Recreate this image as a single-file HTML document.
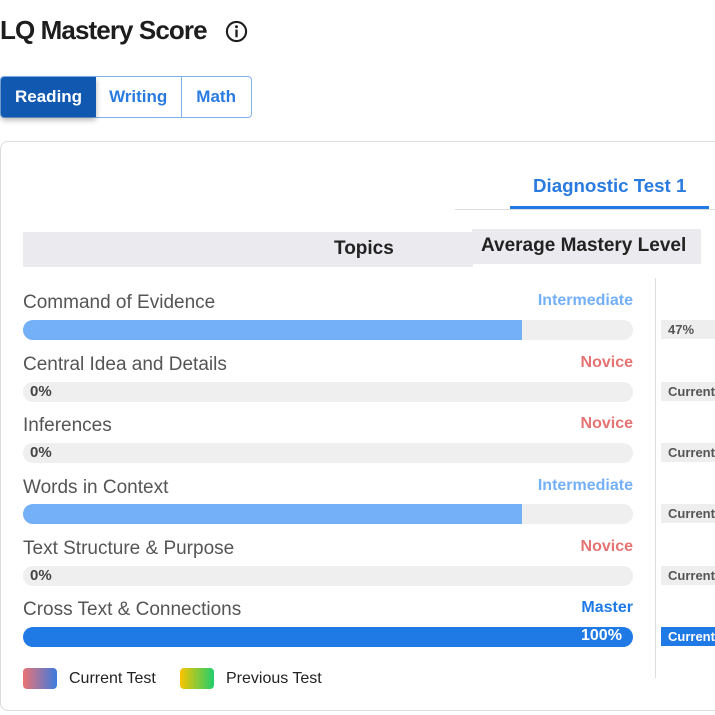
<!DOCTYPE html>
<html><head><style>
body{margin:0;width:715px;height:715px;overflow:hidden;background:#fff;font-family:"Liberation Sans",sans-serif;position:relative}
.a{position:absolute}
h1{position:absolute;left:0;top:15px;margin:0;font-size:26px;font-weight:bold;color:#1d1d1d;letter-spacing:-0.9px}
.tabs{left:0;top:76px;height:40px;display:flex;border:1px solid #7fb0ec;border-radius:4px}
.tabs div{padding:0 13px;line-height:40px;font-size:17px;font-weight:bold;color:#2a7be0}
.card{left:0;top:141px;width:730px;height:568px;border:1px solid #dcdcdc;border-radius:8px}
.lbl{left:23px;font-size:19px;color:#555}
.lv{right:82px;font-size:16px;font-weight:bold}
.bar{left:23px;width:610px;height:20px;border-radius:10px;background:#efefef;overflow:hidden}
.bar i{display:block;height:100%;background:#74b0f7}
.pct{left:30px;font-size:15px;font-weight:bold;color:#444}
.cur{left:661px;width:60px;height:19px;background:#eee;font-size:13px;font-weight:bold;color:#555;line-height:19px;padding-left:7px}
</style></head><body>
<h1>LQ Mastery Score</h1>
<svg class="a" style="left:225px;top:20px" width="23" height="23" viewBox="0 0 24 24"><circle cx="12" cy="12" r="10" fill="none" stroke="#1d1d1d" stroke-width="2.2"/><rect x="10.8" y="10" width="2.4" height="8" fill="#1d1d1d"/><circle cx="12" cy="7" r="1.5" fill="#1d1d1d"/></svg>
<div class="a tabs"><div style="background:#1058b0;color:#fff;padding:0 14px;box-shadow:0 3px 6px rgba(0,0,0,.3);border-radius:3px 0 0 3px">Reading</div><div style="border-right:1px solid #7fb0ec;padding:0 14px 0 13px">Writing</div><div style="padding:0 15px 0 14px">Math</div></div>
<div class="a card"></div>
<div class="a" style="left:533px;top:175px;font-size:18.7px;font-weight:bold;color:#2a7be0">Diagnostic Test 1</div>
<div class="a" style="left:455px;top:209px;width:260px;height:1px;background:#ddd"></div>
<div class="a" style="left:510px;top:206px;width:199px;height:3px;background:#1f7ae6"></div>
<div class="a" style="left:23px;top:232px;width:450px;height:35px;background:#ebebef"></div>
<div class="a" style="left:472px;top:229px;width:229px;height:35px;background:#ebebef"></div>
<div class="a" style="left:334px;top:238px;font-size:19px;font-weight:bold;color:#222">Topics</div>
<div class="a" style="left:481px;top:235px;font-size:19px;font-weight:bold;color:#222">Average Mastery Level</div>
<div class="a" style="left:655px;top:278px;width:1px;height:400px;background:#ddd"></div>

<div class="a lbl" style="top:292px">Command of Evidence</div>
<div class="a lv" style="top:292px;color:#74b0f7">Intermediate</div>
<div class="a bar" style="top:320px"><i style="width:499px"></i></div>
<div class="a cur" style="top:320px">47%</div>

<div class="a lbl" style="top:354px">Central Idea and Details</div>
<div class="a lv" style="top:354px;color:#e57373">Novice</div>
<div class="a bar" style="top:382px"></div><div class="a pct" style="top:383px">0%</div>
<div class="a cur" style="top:382px">Current</div>

<div class="a lbl" style="top:415px">Inferences</div>
<div class="a lv" style="top:415px;color:#e57373">Novice</div>
<div class="a bar" style="top:443px"></div><div class="a pct" style="top:444px">0%</div>
<div class="a cur" style="top:443px">Current</div>

<div class="a lbl" style="top:477px">Words in Context</div>
<div class="a lv" style="top:477px;color:#74b0f7">Intermediate</div>
<div class="a bar" style="top:504px"><i style="width:499px"></i></div>
<div class="a cur" style="top:504px">Current</div>

<div class="a lbl" style="top:538px">Text Structure &amp; Purpose</div>
<div class="a lv" style="top:538px;color:#e57373">Novice</div>
<div class="a bar" style="top:566px"></div><div class="a pct" style="top:567px">0%</div>
<div class="a cur" style="top:566px">Current</div>

<div class="a lbl" style="top:599px">Cross Text &amp; Connections</div>
<div class="a lv" style="top:599px;color:#1f7ae6">Master</div>
<div class="a bar" style="top:627px;background:#1f7ae6"></div>
<div class="a" style="left:581px;top:627px;font-size:16px;font-weight:bold;color:#fff">100%</div>
<div class="a cur" style="top:627px;background:#1f7ae6;color:#fff">Current</div>

<div class="a" style="left:23px;top:668px;width:34px;height:21px;border-radius:4px;background:linear-gradient(90deg,#ec7373,#3b7be0)"></div>
<div class="a" style="left:69px;top:670px;font-size:16px;color:#222">Current Test</div>
<div class="a" style="left:180px;top:668px;width:34px;height:21px;border-radius:4px;background:linear-gradient(90deg,#fbc400,#1fcf6c)"></div>
<div class="a" style="left:226px;top:670px;font-size:16px;color:#222">Previous Test</div>
</body></html>
